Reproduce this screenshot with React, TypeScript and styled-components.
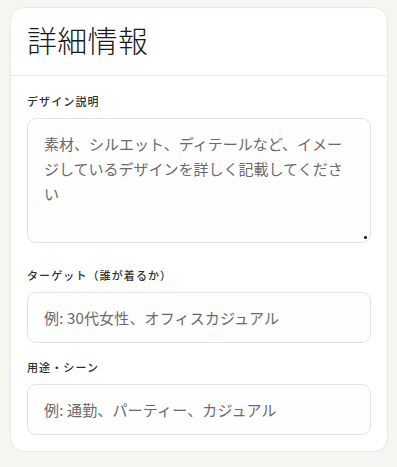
import * as React from 'react';
import styled, { createGlobalStyle } from 'styled-components';

const GlobalStyle = createGlobalStyle`
  html, body {
    margin: 0;
    padding: 0;
    background: #f6f5f1;
  }
  body {
    font-family: "Noto Sans CJK JP", "Noto Sans", sans-serif;
    color: #222;
  }
`;

const Page = styled.div`
  padding: 7px 9px 15px 10px;
`;

const Card = styled.section`
  background: #ffffff;
  border: 1px solid #ebe8e3;
  border-radius: 14px;
  overflow: hidden;
`;

const Header = styled.header`
  box-sizing: border-box;
  height: 68px;
  display: flex;
  align-items: center;
  padding: 0 16px 6px;
  border-bottom: 1px solid #efece8;
`;

const Title = styled.h2`
  margin: 0;
  font-family: "Liberation Serif", "Noto Sans CJK JP", serif;
  font-size: 30px;
  font-weight: 300;
  color: #1a1a1a;
  letter-spacing: 0.01em;
`;

const Body = styled.div`
  display: flex;
  flex-direction: column;
  gap: 17px;
  padding: 18px 16px 16px;
`;

const Field = styled.div<{ $extra?: number }>`
  display: flex;
  flex-direction: column;
  gap: 10px;
  margin-bottom: ${p => p.$extra ?? 0}px;
`;

const Label = styled.label`
  font-size: 11px;
  font-weight: 500;
  letter-spacing: 0.1em;
  color: #2e2e2e;
  line-height: 14px;
`;

const fieldBase = `
  box-sizing: border-box;
  width: 100%;
  border: 1px solid #e6e3df;
  border-radius: 9px;
  background: #fefefe;
  font-family: "Noto Sans CJK JP", "Noto Sans", sans-serif;
  font-size: 15px;
  color: #222;
  outline: none;
  &::placeholder {
    color: #6a6a6a;
  }
`;

const TextArea = styled.textarea`
  ${fieldBase}
  display: block;
  height: 125px;
  padding: 12px 16px;
  line-height: 25px;
  letter-spacing: 0;
  resize: vertical;
  &::-webkit-resizer {
    background: radial-gradient(circle at 70% 70%, #222 1.2px, transparent 1.8px);
  }
`;

const Input = styled.input`
  ${fieldBase}
  display: block;
  height: 51px;
  padding: 0 16px;
  letter-spacing: 0.01em;
`;

export default function App(): React.ReactElement {
  return (
    <Page>
      <GlobalStyle />
      <Card>
        <Header>
          <Title>詳細情報</Title>
        </Header>
        <Body>
          <Field $extra={8}>
            <Label>デザイン説明</Label>
            <TextArea placeholder="素材、シルエット、ディテールなど、イメージしているデザインを詳しく記載してください" />
          </Field>
          <Field>
            <Label>ターゲット（誰が着るか）</Label>
            <Input placeholder="例: 30代女性、オフィスカジュアル" />
          </Field>
          <Field>
            <Label>用途・シーン</Label>
            <Input placeholder="例: 通勤、パーティー、カジュアル" />
          </Field>
        </Body>
      </Card>
    </Page>
  );
}
